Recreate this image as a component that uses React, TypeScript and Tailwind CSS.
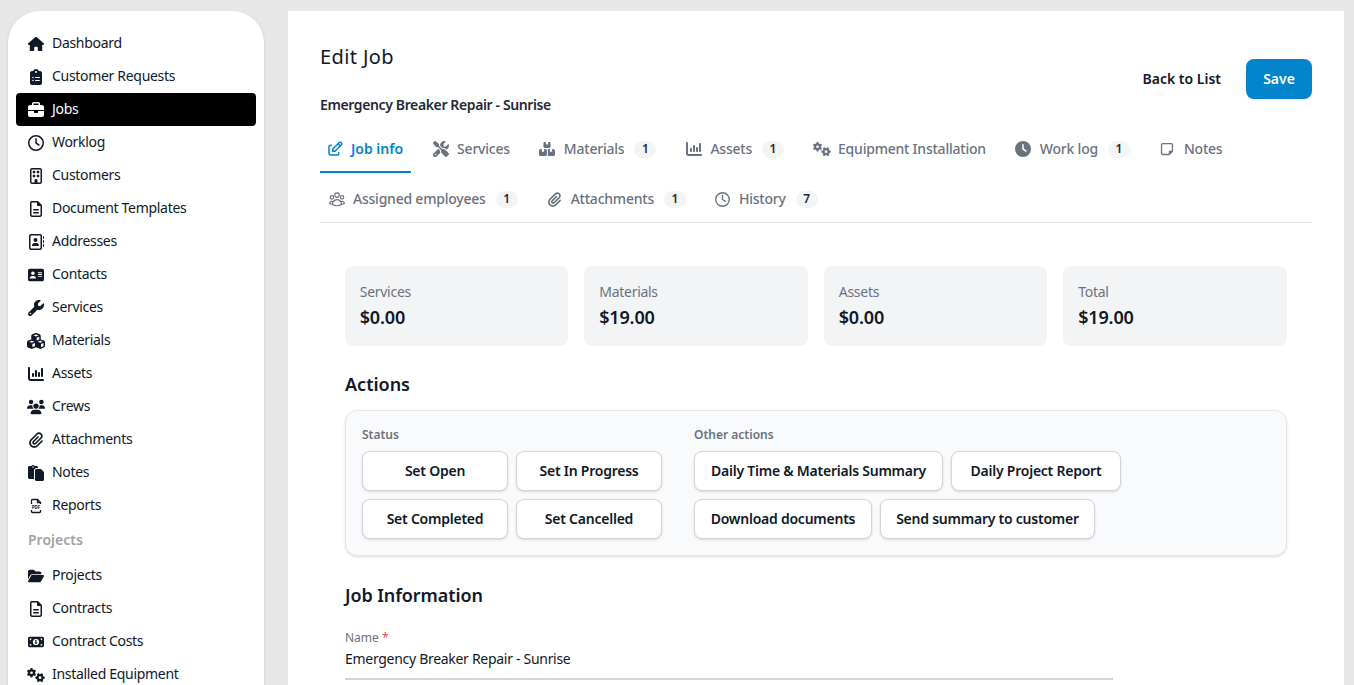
import React from "react";
import { FaHouse, FaClipboardList, FaBriefcase, FaRegClock, FaRegBuilding, FaRegFileLines, FaRegAddressBook, FaAddressCard, FaWrench, FaCubes, FaUsers, FaPaperclip, FaPaste, FaFolderOpen, FaMoneyBill1, FaGears, FaScrewdriverWrench, FaBoxesStacked, FaClock, FaRegNoteSticky, FaChartColumn } from "react-icons/fa6";
import { TbEdit } from "react-icons/tb";
import { HiOutlineUserGroup } from "react-icons/hi2";

type I = React.ComponentType<{ className?: string }>;

function ReportIcon({ className }: { className?: string }) {
  return (
    <svg viewBox="0 0 16 16" fill="none" stroke="currentColor" strokeWidth="1.3" className={className}>
      <path d="M3.5 6V2.5a1 1 0 0 1 1-1h5l3 3V6" />
      <path d="M9.5 1.5v3h3" />
      <text x="8" y="10.6" textAnchor="middle" fontSize="4.6" fontWeight="700" fill="currentColor" stroke="none">PDF</text>
      <path d="M3.5 12v1.5a1 1 0 0 0 1 1h7a1 1 0 0 0 1-1V12" />
    </svg>
  );
}

const big = "size-[18px] shrink-0 -mx-px";
const nav: [I, string, string?][] = [
  [FaHouse, "Dashboard"], [FaClipboardList, "Customer Requests"], [FaBriefcase, "Jobs"], [FaRegClock, "Worklog"],
  [FaRegBuilding, "Customers"], [FaRegFileLines, "Document Templates"], [FaRegAddressBook, "Addresses"], [FaAddressCard, "Contacts"],
  [FaWrench, "Services"], [FaCubes, "Materials", big], [FaChartColumn, "Assets"], [FaUsers, "Crews", big],
  [FaPaperclip, "Attachments"], [FaPaste, "Notes"], [ReportIcon, "Reports"],
];
const nav2: [I, string, string?][] = [
  [FaFolderOpen, "Projects"], [FaRegFileLines, "Contracts"], [FaMoneyBill1, "Contract Costs"], [FaGears, "Installed Equipment", big],
];

function NavItem({ icon: Icon, label, cls }: { icon: I; label: string; cls?: string }) {
  const active = label === "Jobs";
  return (
    <div className={`flex h-[33px] shrink-0 items-center gap-2 rounded pl-3 ${active ? "bg-black text-white" : "text-[#111827]"}`}>
      <span className="flex w-4 justify-center"><Icon className={cls ?? "size-4"} /></span>
      <span className="mb-[2px] text-sm leading-5 tracking-[-0.022em]">{label}</span>
    </div>
  );
}

function Tab({ icon: Icon, label, count, active, first, second, iconCls }: { icon: I; label: string; count?: string; active?: boolean; first?: boolean; second?: boolean; iconCls?: string }) {
  return (
    <div className={`flex items-center ${active ? "pl-[7px] pr-2" : "px-2"} ${first ? "" : second ? "ml-3" : "ml-[13px]"} ${second ? "h-[49px] pt-[3px]" : "h-[50px] pt-[2px]"} ${active ? "border-b-2 border-[#0284cc] pt-[4px] text-[#0284cc]" : "text-[#6b7280]"}`}>
      <span className={`flex justify-center ${active ? "w-4" : "w-[17px]"}`}><Icon className={iconCls ?? "size-4"} /></span>
      <span className={`ml-2 text-sm leading-5 ${active ? "font-semibold" : "font-medium tracking-[-0.016em]"}`}>{label}</span>
      {count && <span className="ml-[10px] flex h-[17px] w-[22px] items-center justify-center rounded-full bg-[#f3f4f6] text-xs font-semibold text-[#1f2937]">{count}</span>}
    </div>
  );
}

function Stat({ label, value }: { label: string; value: string }) {
  return (
    <div className="flex h-20 flex-col justify-center rounded-lg bg-[#f3f4f6] px-[15px] pb-[2px]">
      <div className="text-sm leading-5 tracking-[-0.02em] text-[#6b7280]">{label}</div>
      <div className="mt-[3px] text-lg font-semibold leading-6 tracking-[-0.01em] text-[#111827]">{value}</div>
    </div>
  );
}

function Btn({ children, w }: { children: React.ReactNode; w?: string }) {
  return (
    <button className={`flex h-10 items-center justify-center rounded-lg border border-[#d1d5db] bg-white text-sm font-semibold tracking-[-0.017em] text-[#111827] shadow-sm ${w ?? ""}`}>
      {children}
    </button>
  );
}

export default function App() {
  return (
    <div className="flex h-[685px] gap-6 overflow-hidden bg-[#e7e7e7] pl-2 pr-2.5 pt-[11px] font-['Noto_Sans','Liberation_Sans',sans-serif]">
      <aside className="flex w-64 shrink-0 flex-col rounded-t-[32px] bg-white p-2 pt-4 shadow-sm">
        {nav.map(([ic, l, c]) => <NavItem key={l} icon={ic} label={l} cls={c} />)}
        <div className="flex h-[37px] shrink-0 items-center pb-px pl-3 text-sm font-semibold text-[#a3a3a3]">Projects</div>
        {nav2.map(([ic, l, c]) => <NavItem key={l} icon={ic} label={l} cls={c} />)}
      </aside>
      <main className="min-w-0 flex-1 bg-white px-8">
        <div className="flex items-start justify-between">
          <div>
            <h1 className="mt-[32px] text-xl leading-7 tracking-[0.02em] text-[#111827]">Edit Job</h1>
            <div className="mt-[24px] text-sm font-semibold leading-5 tracking-[-0.027em] text-[#1f2937]">Emergency Breaker Repair - Sunrise</div>
          </div>
          <div className="mt-12 flex items-center gap-[25px]">
            <span className="text-sm font-semibold text-[#111827]">Back to List</span>
            <button className="h-10 w-[66px] rounded-lg bg-[#0284cc] text-sm font-semibold text-white">Save</button>
          </div>
        </div>
        <div className="mt-[8px] border-b border-[#e5e7eb]">
          <div className="flex">
            <Tab icon={TbEdit} label="Job info" active first iconCls="size-[18px] shrink-0 -mx-px" />
            <Tab icon={FaScrewdriverWrench} label="Services" />
            <Tab icon={FaBoxesStacked} label="Materials" count="1" />
            <Tab icon={FaChartColumn} label="Assets" count="1" />
            <Tab icon={FaGears} label="Equipment Installation" iconCls="size-[18px] shrink-0" />
            <Tab icon={FaClock} label="Work log" count="1" />
            <Tab icon={FaRegNoteSticky} label="Notes" iconCls="size-[14px]" />
          </div>
          <div className="flex">
            <Tab icon={HiOutlineUserGroup} label="Assigned employees" count="1" first second iconCls="size-[18px] shrink-0" />
            <Tab icon={FaPaperclip} label="Attachments" count="1" second iconCls="size-[15px]" />
            <Tab icon={FaRegClock} label="History" count="7" second iconCls="size-[15px]" />
          </div>
        </div>
        <div className="px-[25px] pt-[43px]">
          <div className="ml-[-0.25px] mr-[0.25px] grid grid-cols-4 gap-4">
            <Stat label="Services" value="$0.00" />
            <Stat label="Materials" value="$19.00" />
            <Stat label="Assets" value="$0.00" />
            <Stat label="Total" value="$19.00" />
          </div>
          <h2 className="mt-6 text-lg font-semibold leading-7 text-[#111827]">Actions</h2>
          <div className="mt-3 flex h-[146px] gap-8 rounded-xl border border-[#e5e7eb] bg-[#f9fafb] px-4 pt-4 shadow-sm">
            <div>
              <div className="text-xs font-semibold leading-4 text-[#6b7280]">Status</div>
              <div className="mt-2 grid grid-cols-[146px_146px] gap-2">
                <Btn>Set Open</Btn><Btn>Set In Progress</Btn><Btn>Set Completed</Btn><Btn>Set Cancelled</Btn>
              </div>
            </div>
            <div>
              <div className="text-xs font-semibold leading-4 text-[#6b7280]">Other actions</div>
              <div className="mt-2 flex flex-col gap-2">
                <div className="flex gap-2"><Btn w="w-[249px]">Daily Time &amp; Materials Summary</Btn><Btn w="w-[170px]">Daily Project Report</Btn></div>
                <div className="flex gap-2"><Btn w="w-[178px]">Download documents</Btn><Btn w="w-[215px]">Send summary to customer</Btn></div>
              </div>
            </div>
          </div>
          <h2 className="mt-[25px] text-lg font-semibold leading-7 tracking-[-0.005em] text-[#111827]">Job Information</h2>
          <div className="mt-[21px] w-[768px] border-b-2 border-[#d1d5db] pb-[9px]">
            <div className="text-xs leading-4 text-[#6b7280]">Name <span className="text-[#ef4444]">*</span></div>
            <div className="mt-[3px] text-sm leading-5 tracking-[-0.021em] text-[#111827]">Emergency Breaker Repair - Sunrise</div>
          </div>
        </div>
      </main>
    </div>
  );
}
